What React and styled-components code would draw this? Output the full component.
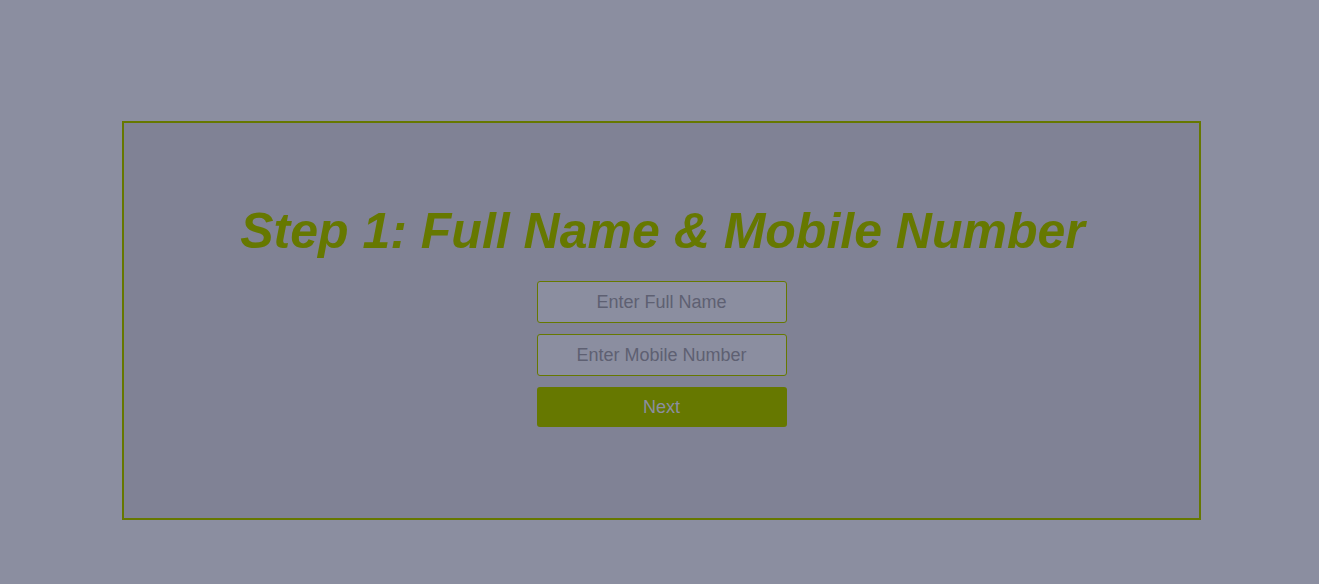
import React, { useState } from 'react';
import styled, { createGlobalStyle } from 'styled-components';

const GlobalStyle = createGlobalStyle`
    html, body {
        margin:0;
        padding:0;
        background-color:#8b8ea0;
        font-family:"Liberation Sans", Arial, sans-serif;
    }
`

const Page = styled.div`
    width:1319px;
    height:584px;
    padding-top:121px;
    box-sizing:border-box;
`

const Card = styled.div`
    width:1079px;
    height:399px;
    margin:0 auto 0 122px;
    box-sizing:border-box;
    border:2px solid #667800;
    background-color:#808295;
    display:flex;
    flex-direction:column;
    align-items:center;
    padding-top:78px;
`

const Title = styled.h1`
    margin:0 0 20px 2px;
    color:#667800;
    font-size:50px;
    font-style:italic;
    font-weight:bold;
    line-height:60px;
`

const Form = styled.form`
    display:flex;
    flex-direction:column;
    gap:11px;
    width:250px;
`

const Input = styled.input`
    height:42px;
    box-sizing:border-box;
    border:1px solid #667800;
    border-radius:3px;
    background-color:#8b8ea0;
    text-align:center;
    font-family:"Liberation Sans", Arial, sans-serif;
    font-size:18px;
    color:#3a3c48;
    outline:none;
    &::placeholder{
        color:#5e6072;
    }
`

const NextButton = styled.button`
    height:40px;
    border:none;
    border-radius:3px;
    background-color:#667800;
    color:#8b8ea0;
    font-family:"Liberation Sans", Arial, sans-serif;
    font-size:18px;
    cursor:pointer;
`

const App = () => {
    const [name, setName] = useState('');
    const [mobile, setMobile] = useState('');

    return (
        <>
        <GlobalStyle />
        <Page>
            <Card>
                <Title>Step 1: Full Name &amp; Mobile Number</Title>
                <Form onSubmit={e => e.preventDefault()}>
                    <Input placeholder="Enter Full Name" value={name}
                        onChange={e => setName(e.target.value)} />
                    <Input placeholder="Enter Mobile Number" value={mobile}
                        onChange={e => setMobile(e.target.value)} />
                    <NextButton type="submit">Next</NextButton>
                </Form>
            </Card>
        </Page>
        </>
    )
}

export default App;
